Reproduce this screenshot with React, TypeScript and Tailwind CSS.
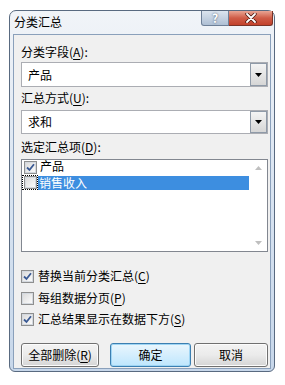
import React from "react";

const font = "font-['Microsoft_YaHei','Noto_Sans_CJK_SC',sans-serif]";

function Mn({ ch }: { ch: string }) {
  return <span className="underline underline-offset-[2px]">{ch}</span>;
}

function CheckBox({ checked }: { checked: boolean }) {
  return (
    <div className="w-[13px] h-[13px] border border-[#8e8f8f] bg-white flex items-center justify-center shrink-0">
      <div className="w-[11px] h-[11px] border border-[#d4d9df] bg-gradient-to-br from-[#dcdcdc] to-[#fbfbfb] flex items-center justify-center">
        {checked && (
          <svg width="9" height="9" viewBox="0 0 9 9">
            <path d="M1 4.5 L3.5 7 L8 1.2" fill="none" stroke="#3a5a94" strokeWidth="1.8" />
          </svg>
        )}
      </div>
    </div>
  );
}

function Combo({ value, h }: { value: string; h: string }) {
  return (
    <div className={`${h} flex border border-[#abadb3] bg-white`}>
      <div className="flex-1 flex items-center pl-[6px] text-[12px] text-black">{value}</div>
      <div className="w-[17px] border border-[#8f9aa8] bg-gradient-to-b from-[#f4f4f4] to-[#d6d6d6] flex items-center justify-center">
        <svg width="7" height="4" viewBox="0 0 7 4">
          <path d="M0 0 L7 0 L3.5 4 Z" fill="#000" />
        </svg>
      </div>
    </div>
  );
}

function Btn({ children, def, w }: { children: React.ReactNode; def?: boolean; w: string }) {
  return (
    <div
      className={`${w} h-[24px] rounded-[3px] border flex items-center justify-center text-[12px] text-black ${
        def
          ? "border-[#3c7fb1] bg-gradient-to-b from-[#eaf6fd] to-[#bee6fd] shadow-[inset_0_0_0_1px_#9fd5f4]"
          : "border-[#707070] bg-gradient-to-b from-[#f3f3f3] via-[#ebebeb] to-[#d5d5d5] shadow-[inset_0_0_0_1px_#fcfcfc]"
      }`}
    >
      {children}
    </div>
  );
}

export default function App() {
  return (
    <div className={`w-[285px] h-[385px] bg-white pt-[10px] pl-[9px] ${font}`}>
      <div className="w-[266px] h-[362px] rounded-t-[7px] rounded-b-[6px] border border-[#596a80] bg-gradient-to-b from-[#f1f4f8] via-[#d9e4f1] to-[#c7d7ea] flex flex-col px-[3px] pb-[2px]">
        {/* title bar */}
        <div className="h-[23px] flex items-start shrink-0">
          <span className="pl-[1px] pt-[3px] leading-[16px] text-[12px] text-black">分类汇总</span>
          <div className="ml-auto mr-[-2px] flex">
            <div className="w-[28px] h-[15px] rounded-bl-[3px] border border-t-0 border-[#6d7f97] bg-gradient-to-b from-[#dbe4ee] to-[#aebfd4] flex items-center justify-center text-[12px] font-bold leading-none text-white [text-shadow:0_0_2px_#3b4a60]">
              ?
            </div>
            <div className="w-[44px] h-[15px] rounded-br-[3px] border border-t-0 border-l-0 border-[#7a3327] bg-gradient-to-b from-[#e8a594] via-[#cf5c47] to-[#c2412b] flex items-center justify-center">
              <svg width="12" height="10" viewBox="0 0 12 10">
                <path d="M2 1 L10 9 M10 1 L2 9" stroke="#4a1810" strokeWidth="3.4" strokeLinecap="round" />
                <path d="M2 1 L10 9 M10 1 L2 9" stroke="#ffffff" strokeWidth="1.8" strokeLinecap="round" />
              </svg>
            </div>
          </div>
        </div>

        {/* client */}
        <div className="flex-1 border border-[#8aa0bb] bg-[#f0f0f0] pl-[7px] pr-[2px] flex flex-col text-[12px] text-black">
          <div className="mt-[9px] h-[16px] leading-[16px]">
            分类字段(<Mn ch="A" />):
          </div>
          <div className="mt-[2px]">
            <Combo value="产品" h="h-[25px]" />
          </div>
          <div className="mt-[3px] h-[16px] leading-[16px]">
            汇总方式(<Mn ch="U" />):
          </div>
          <div className="mt-[4px]">
            <Combo value="求和" h="h-[24px]" />
          </div>
          <div className="mt-[5px] h-[16px] leading-[16px]">
            选定汇总项(<Mn ch="D" />):
          </div>

          {/* list box */}
          <div className="mt-[4px] h-[93px] border border-[#828790] bg-white flex">
            <div className="flex-1 flex flex-col">
              <div className="h-[10px] flex items-center gap-[3px] pl-[2px] mt-[1px]">
                <div className="self-start">
                  <CheckBox checked />
                </div>
                <span className="leading-[10px]">产品</span>
              </div>
              <div className="mt-[4px] h-[15px] flex items-center">
                <div className="h-[15px] w-[16px] border border-dotted border-black flex items-center justify-center shrink-0">
                  <CheckBox checked={false} />
                </div>
                <div className="flex-1 h-[14px] bg-[#3d8ee0] text-white leading-[14px] pl-[1px] mr-[1px]">销售收入</div>
              </div>
            </div>
            <div className="w-[17px] flex flex-col items-center justify-between py-[6px]">
              <svg width="7" height="4" viewBox="0 0 7 4">
                <path d="M0 4 L7 4 L3.5 0 Z" fill="#bfbfbf" />
              </svg>
              <svg width="7" height="4" viewBox="0 0 7 4">
                <path d="M0 0 L7 0 L3.5 4 Z" fill="#bfbfbf" />
              </svg>
            </div>
          </div>

          <div className="mt-[16px] h-[16px] flex items-center gap-[4px]">
            <CheckBox checked />
            <span>
              替换当前分类汇总(<Mn ch="C" />)
            </span>
          </div>
          <div className="mt-[6px] h-[16px] flex items-center gap-[4px]">
            <CheckBox checked={false} />
            <span>
              每组数据分页(<Mn ch="P" />)
            </span>
          </div>
          <div className="mt-[5px] h-[16px] flex items-center gap-[4px]">
            <CheckBox checked />
            <span>
              汇总结果显示在数据下方(<Mn ch="S" />)
            </span>
          </div>

          <div className="mt-[16px] flex">
            <Btn w="w-[80px]">
              全部删除(<Mn ch="R" />)
            </Btn>
            <div className="ml-[11px]">
              <Btn w="w-[81px]" def>
                确定
              </Btn>
            </div>
            <div className="ml-[3px]">
              <Btn w="w-[74px]">取消</Btn>
            </div>
          </div>
        </div>
      </div>
    </div>
  );
}
